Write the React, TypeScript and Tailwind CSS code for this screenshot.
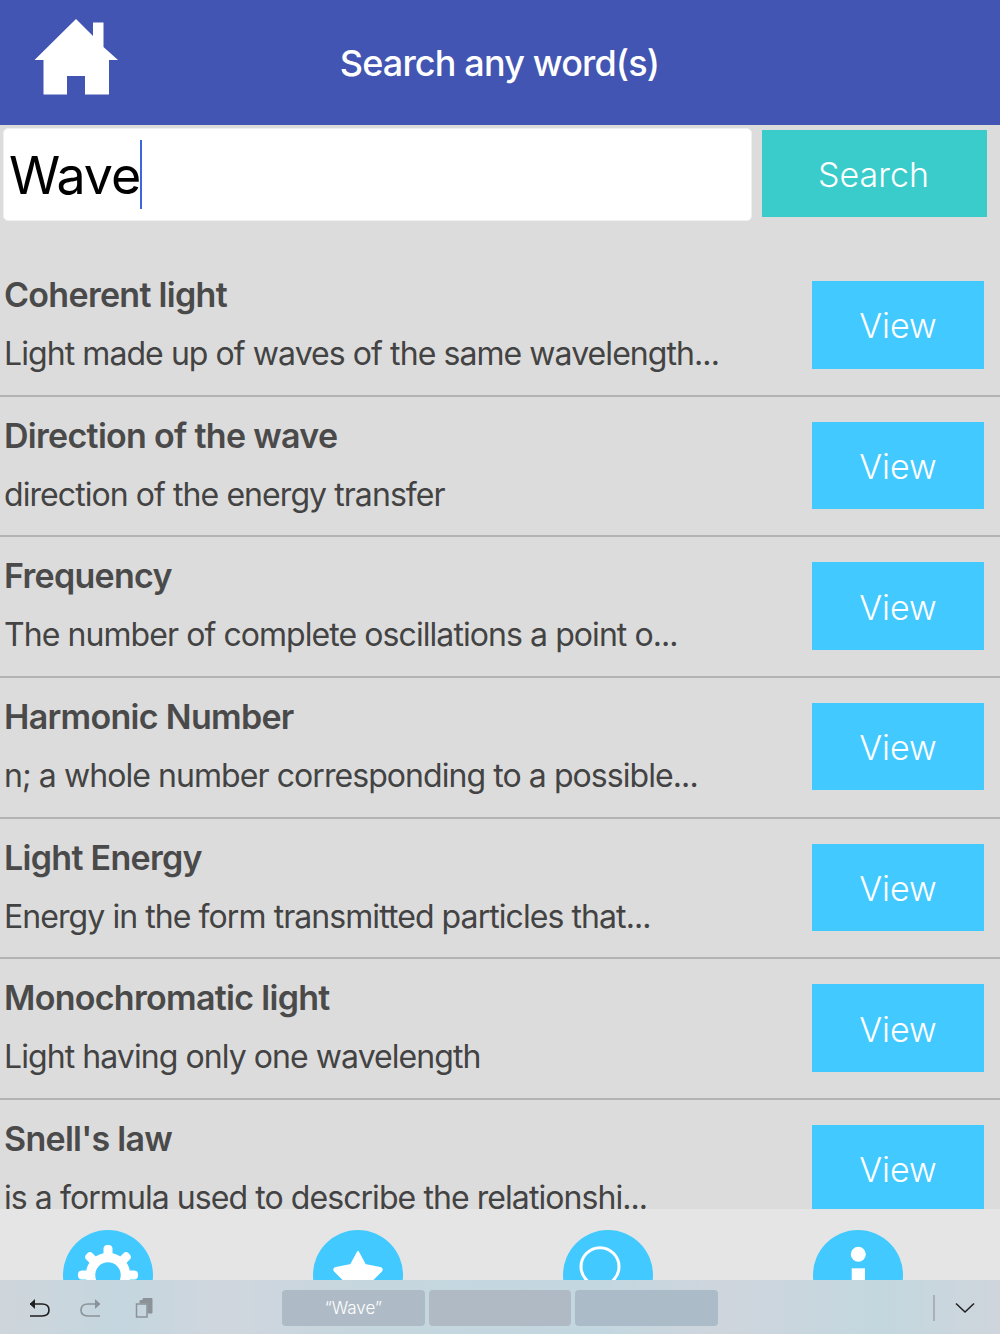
import React, { FC, ReactElement } from "react";

const rows = [
  { title: "Coherent light", text: "Light made up of waves of the same wavelength..." },
  { title: "Direction of the wave", text: "direction of the energy transfer" },
  { title: "Frequency", text: "The number of complete oscillations a point o..." },
  { title: "Harmonic Number", text: "n; a whole number corresponding to a possible..." },
  { title: "Light Energy", text: "Energy in the form transmitted particles that..." },
  { title: "Monochromatic light", text: "Light having only one wavelength" },
  { title: "Snell's law", text: "is a formula used to describe the relationshi..." },
];

const Row: FC<{ title: string; text: string }> = ({ title, text }): ReactElement => {
  return (
    <div className="h-[140.67px] shrink-0 border-b-2 border-[#b3b3b3] pl-[4px] pr-4 flex justify-between">
      <div className="min-w-0">
        <h2 className="mt-[19px] text-[34px] leading-[40px] font-semibold tracking-[-0.7px] text-[#4a4a4a]">{title}</h2>
        <p className="mt-[19px] text-[32px] leading-[40px] tracking-[-0.93px] text-[#434343] whitespace-nowrap">{text}</p>
      </div>
      <button className="mt-[25px] w-[172px] h-[87.5px] shrink-0 bg-[#42c9ff] text-white text-[34px] leading-[40px] font-light pt-[3px]">View</button>
    </div>
  );
};

const Circle: FC<{ children: React.ReactNode }> = ({ children }): ReactElement => (
  <div className="w-[90px] h-[90px] rounded-full bg-[#42c9ff]">
    <svg viewBox="0 0 90 90" className="w-[90px] h-[90px]" fill="white">
      {children}
    </svg>
  </div>
);

const gearTeeth = [0, 45, 90, 135, 180, 225, 270, 315];

const App: FC = (): ReactElement => {
  return (
    <div className="w-[1000px] h-[1334px] overflow-hidden flex flex-col bg-[#dcdcdc] font-['Inter','Liberation_Sans',sans-serif]">
      <header className="h-[125px] shrink-0 bg-[#4255b2] flex items-center justify-center relative">
        <svg viewBox="0 0 84 76" className="absolute left-[34px] top-[19px] w-[84px] h-[76px]" fill="white">
          <path d="M0.5 41 L42 0 L59 17 L59 3.5 L69.5 3.5 L69.5 28 L84 41 L75 41 L75 75.5 L51 75.5 L51 57 L33 57 L33 75.5 L9.5 75.5 L9.5 41 Z" />
        </svg>
        <h1 className="text-[36px] font-medium text-white tracking-[-0.85px] -ml-[1px]">Search any word(s)</h1>
      </header>

      <div className="h-[131px] shrink-0 flex items-start pt-[3px] pl-[3px]">
        <div className="w-[749px] h-[93px] rounded-[5px] bg-white border border-[#f0f0f0] flex items-center pl-[5px]">
          <span className="text-[52px] leading-[68px] text-black tracking-[-1.1px] pt-[2px]">Wave</span>
          <span className="w-[2px] h-[69px] bg-[#3b66e0]" />
        </div>
        <button className="ml-[10px] mt-[2px] w-[225px] h-[87px] bg-[#3accca] text-white text-[34px] leading-[40px] font-light pt-[2px] pr-[2px]">Search</button>
      </div>

      <div className="flex-1 min-h-0 overflow-hidden">
        {rows.map((r) => (
          <Row key={r.title} title={r.title} text={r.text} />
        ))}
      </div>

      <div className="h-[71px] shrink-0 overflow-hidden bg-[#e4e5e4] flex gap-[160px] pl-[62.7px] pt-[21px]">
        <Circle>
          <g transform="translate(45 45)">
            {gearTeeth.map((a) => (
              <rect key={a} x="-4.5" y="-30" width="9" height="14" rx="4" transform={`rotate(${a})`} />
            ))}
            <circle r="17.5" fill="none" stroke="white" strokeWidth="9.5" />
          </g>
        </Circle>
        <Circle>
          <path
            d="M45 22 L52 35 L67 38 Q70 39 68 41 L57 52 L60 68 Q60 71 57 69 L45 62 L33 69 Q30 71 30 68 L33 52 L22 41 Q20 39 23 38 L38 35 Z"
            stroke="white"
            strokeWidth="2"
            strokeLinejoin="round"
          />
        </Circle>
        <Circle>
          <circle cx="37" cy="36.7" r="19" fill="none" stroke="white" strokeWidth="3" />
        </Circle>
        <Circle>
          <circle cx="45.3" cy="24.3" r="7.5" />
          <rect x="38.7" y="38.3" width="13.3" height="40" />
        </Circle>
      </div>

      <div className="h-[54px] shrink-0 flex items-center pt-[2px] bg-[linear-gradient(90deg,#cfd5db_0%,#c4d6df_12%,#d0d6de_22%,#c5d6de_38%,#c3d7e0_60%,#cfd5dd_72%,#c3d7df_88%,#cfd5dc_100%)]">
        <div className="w-[282px] shrink-0 flex items-center">
          <svg viewBox="0 0 24 22" className="ml-[27px] w-6 h-[22px]" fill="none" stroke="#1f1f1f" strokeWidth="1.6">
            <path d="M3 7 H15 Q22 7 22 13 Q22 19 15 19 H3" />
            <path d="M8 2.5 L3 7 L8 11.5" fill="#1f1f1f" strokeWidth="0.8" />
          </svg>
          <svg viewBox="0 0 24 22" className="ml-[28px] w-6 h-[22px]" fill="none" stroke="#8b9298" strokeWidth="1.6">
            <path d="M21 7 H9 Q2 7 2 13 Q2 19 9 19 H21" />
            <path d="M16 2.5 L21 7 L16 11.5" fill="#8b9298" strokeWidth="0.8" />
          </svg>
          <svg viewBox="0 0 20 22" className="ml-[31px] w-5 h-[22px]" fill="none" stroke="#8b9298" strokeWidth="1.5">
            <path d="M6 6 V3.5 H9 V1.5 H18 V16 H14 V6 Z" fill="#8b9298" strokeWidth="1" />
            <rect x="2.5" y="7" width="10.5" height="13" />
          </svg>
        </div>
        <div className="flex gap-[4px]">
          <div className="w-[142.67px] h-[36px] rounded-[4px] bg-[#aebbc6] flex items-center justify-center text-white text-[17px] font-light pt-[2px]">
            {"\u201CWave\u201D"}
          </div>
          <div className="w-[142.67px] h-[36px] rounded-[4px] bg-[#b0bac4]" />
          <div className="w-[142.67px] h-[36px] rounded-[4px] bg-[#abbbc7]" />
        </div>
        <div className="ml-[215px] w-[2px] h-[26px] bg-[#a9b0b6]" />
        <svg viewBox="0 0 20 12" className="ml-[20px] w-5 h-3" fill="none" stroke="#1f1f1f" strokeWidth="1.5">
          <path d="M1 1.5 L10 10 L19 1.5" />
        </svg>
      </div>
    </div>
  );
};

export default App;
